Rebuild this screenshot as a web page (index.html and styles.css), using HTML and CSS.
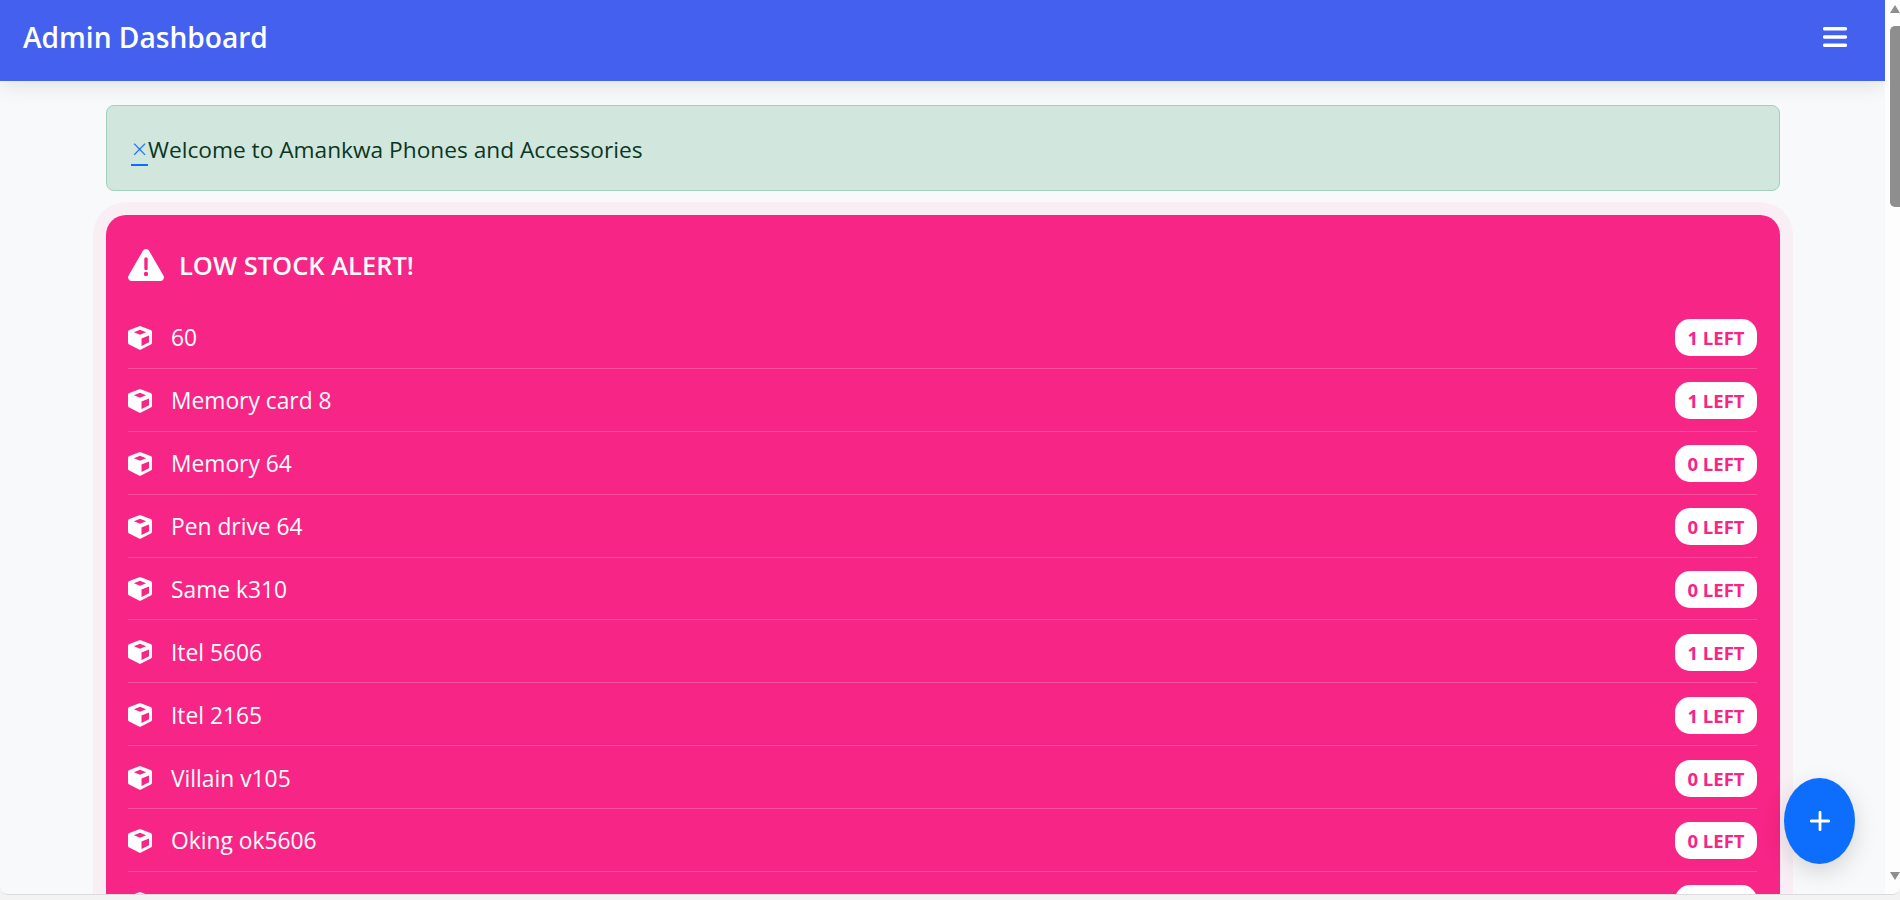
FILE: index.html
```html
<!DOCTYPE html>
<html lang="en">
<head>
<meta charset="utf-8">
<title>Admin Dashboard</title>
<link rel="stylesheet" href="styles.css">
</head>
<body>
<div class="window">
  <div class="viewport">
    <div class="page">
      <header class="topbar">
        <span class="brand">Admin Dashboard</span>
        <button class="menu-btn" aria-label="Menu">
          <svg viewBox="0 0 24 20" width="24" height="20"><path d="M1.600 1.800h20.800M1.600 10h20.800M1.600 18.200h20.800" stroke="#fff" stroke-width="3.400" stroke-linecap="round"/></svg>
        </button>
      </header>
      <main class="content">
        <div class="welcome"><a class="close" href="#">×</a>Welcome to Amankwa Phones and Accessories</div>
        <section class="stock-card">
          <h2 class="stock-title">
            <svg class="warn" viewBox="0 0 36 32" width="36" height="32"><path fill-rule="evenodd" fill="#fff" d="M18 0c1.300 0 2.400.7 3.100 1.800l14.300 24.700c.7 1.200.7 2.500 0 3.700-.7 1.100-1.800 1.800-3.100 1.800H3.700c-1.300 0-2.400-.7-3.100-1.800-.7-1.200-.7-2.500 0-3.700L14.900 1.800C15.600.7 16.700 0 18 0zM16.300 10v9.500c0 .9.800 1.700 1.700 1.700s1.700-.8 1.700-1.700V10c0-.9-.8-1.700-1.700-1.700s-1.700.8-1.700 1.700zM18 22.800a2.200 2.200 0 1 0 0 4.400 2.200 2.200 0 0 0 0-4.400z"/></svg>
            LOW STOCK ALERT!
          </h2>
          <ul class="stock-list">
            <li class="stock-row"><svg class="box" viewBox="0 0 512 512"><use href="#cube"/></svg><span class="name">60</span><span class="badge">1 LEFT</span></li>
            <li class="stock-row"><svg class="box" viewBox="0 0 512 512"><use href="#cube"/></svg><span class="name">Memory card 8</span><span class="badge">1 LEFT</span></li>
            <li class="stock-row"><svg class="box" viewBox="0 0 512 512"><use href="#cube"/></svg><span class="name">Memory 64</span><span class="badge">0 LEFT</span></li>
            <li class="stock-row"><svg class="box" viewBox="0 0 512 512"><use href="#cube"/></svg><span class="name">Pen drive 64</span><span class="badge">0 LEFT</span></li>
            <li class="stock-row"><svg class="box" viewBox="0 0 512 512"><use href="#cube"/></svg><span class="name">Same k310</span><span class="badge">0 LEFT</span></li>
            <li class="stock-row"><svg class="box" viewBox="0 0 512 512"><use href="#cube"/></svg><span class="name">Itel 5606</span><span class="badge">1 LEFT</span></li>
            <li class="stock-row"><svg class="box" viewBox="0 0 512 512"><use href="#cube"/></svg><span class="name">Itel 2165</span><span class="badge">1 LEFT</span></li>
            <li class="stock-row"><svg class="box" viewBox="0 0 512 512"><use href="#cube"/></svg><span class="name">Villain v105</span><span class="badge">0 LEFT</span></li>
            <li class="stock-row"><svg class="box" viewBox="0 0 512 512"><use href="#cube"/></svg><span class="name">Oking ok5606</span><span class="badge">0 LEFT</span></li>
            <li class="stock-row"><svg class="box" viewBox="0 0 512 512"><use href="#cube"/></svg><span class="name"></span><span class="badge">0 LEFT</span></li>
          </ul>
        </section>
      </main>
      <button class="fab" aria-label="Add">
        <svg viewBox="0 0 20 20" width="20" height="20"><path d="M10 1.300v17.400M1.300 10h17.400" stroke="#fff" stroke-width="2.800" stroke-linecap="round"/></svg>
      </button>
    </div>
    <div class="scrollbar">
      <span class="arrow-up"></span>
      <span class="thumb"></span>
      <span class="arrow-down"></span>
    </div>
  </div>
</div>
<svg class="defs" width="0" height="0"><symbol id="cube" viewBox="0 0 512 512"><path fill="#fff" fill-rule="evenodd" d="M239.100 6.300l-208 78C12.400 91.300 0 109.300 0 129.300v225.100c0 18.200 10.300 34.800 26.500 42.900l208 104c13.500 6.800 29.400 6.800 42.900 0l208-104c16.300-8.100 26.500-24.800 26.500-42.900V129.300c0-20-12.400-37.900-31.100-44.900l-208-78C262 2.200 250 2.200 239.100 6.300zM256 82l130 50-130 52-130-52zM288 424.400V265l160-65v144.400l-160 80z"/></symbol></svg>
</body>
</html>
```
FILE: styles.css
```css
* { box-sizing: border-box; }
html, body { margin: 0; height: 900px; overflow: hidden; background: #f3f3f3; }
body { font-family: "Open Sans", "Noto Sans", sans-serif; }
.defs { display: block; height: 0; }
.window { height: 895px; border-bottom: 1px solid #dcdcdc; border-radius: 0 0 8px 8px; overflow: hidden; }
.viewport { display: flex; height: 894px; }
.page { position: relative; flex: 1; min-width: 0; overflow: hidden; background: #f8f9fa; }
.topbar { position: relative; z-index: 1; height: 81px; display: flex; align-items: center; justify-content: space-between; padding: 0 38px 0 23px; background: #4361ee; box-shadow: 0 4px 20px rgba(0,0,0,.1); }
.brand { color: #fff; font-size: 28.100px; font-weight: 600; position: relative; top: -4px; }
.menu-btn { display: flex; padding: 0; border: 0; background: none; position: relative; top: -4px; }
.content { padding: 24px 105px 0 106px; }
.welcome { height: 86px; display: flex; align-items: center; padding: 2px 24px 0; font-size: 22.700px; color: #0a3622; background: #d1e7dd; border: 1px solid #a3cfbb; border-radius: 8px; }
.close { width: 17px; margin-top: 1px; text-align: center; line-height: 31px; color: #0d6efd; text-decoration: none; font-size: 27px; font-weight: 300; border-bottom: 2px solid #0d6efd; }
.stock-card { margin-top: 24px; padding: 25px 23px 30px 22px; background: #f72585; border-radius: 20px; box-shadow: 0 0 0 13px #faeef5; color: #fff; }
.stock-title { display: flex; align-items: center; gap: 15px; margin: 0 0 16px; font-size: 25.500px; font-weight: 600; height: 50px; }
.stock-list { list-style: none; margin: 0; padding: 0; }
.stock-row { display: flex; align-items: center; height: 62.875px; padding-top: 2px; border-bottom: 1px solid rgba(255,255,255,.2); }
.box { width: 24px; height: 24px; margin-right: 19px; flex: none; }
.name { flex: 1; font-size: 22.800px; }
.badge { width: 82px; height: 37px; display: flex; align-items: center; justify-content: center; background: #fff; color: #f72585; border-radius: 15px; font-size: 18.500px; font-weight: 700; }
.fab { position: absolute; left: 1784px; top: 778px; width: 71px; height: 86px; display: flex; align-items: center; justify-content: center; padding: 0; border: 0; border-radius: 50%; background: #0d6efd; box-shadow: 0 8px 25px rgba(0,0,0,.15); }
.scrollbar { position: relative; width: 15px; flex: none; background: #fdfdfd; display: flex; flex-direction: column; align-items: flex-end; }
.arrow-up { width: 0; height: 0; margin: 5px 0 0; border-left: 5.500px solid transparent; border-right: 5.500px solid transparent; border-bottom: 8px solid #8e8e8e; }
.thumb { width: 10px; height: 181px; margin-top: 13px; background: #8e8e8e; border-radius: 5px 0 0 5px; }
.arrow-down { width: 0; height: 0; margin-top: auto; margin-bottom: 14px; border-left: 5.500px solid transparent; border-right: 5.500px solid transparent; border-top: 8px solid #8e8e8e; }
```
